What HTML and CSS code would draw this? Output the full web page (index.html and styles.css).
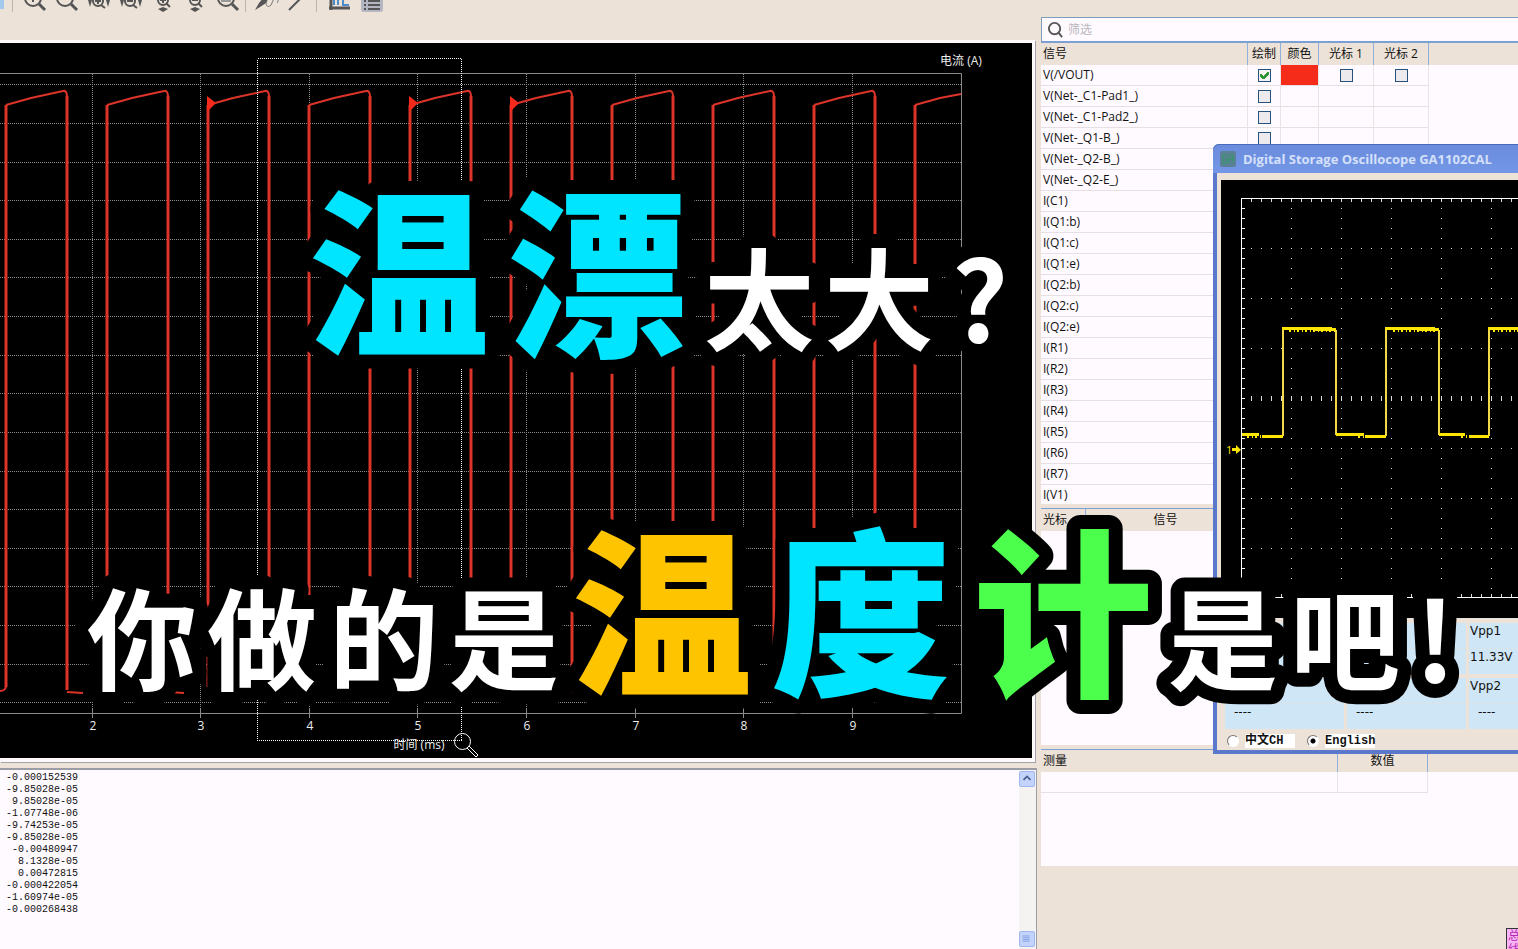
FILE: index.html
```html
<!DOCTYPE html>
<html lang="zh-CN">
<head>
    <meta charset="UTF-8">
    <meta name="viewport" content="width=device-width, initial-scale=1.0">
    <title>温漂太大?</title>
    <link rel="stylesheet" href="styles.css">
</head>
<body>
    <div class="simulator">
        <!-- Left side: toolbar, plot and log -->
        <main class="plot-side">
            <div class="toolbar">
                <span class="active-edge"></span>
                <span class="separator"></span>
                <button class="tool" aria-label="放大"><svg viewBox="0 0 32 24"><circle cx="14" cy="10" r="8"/><path d="M14 6v8M10 10h8"/><path class="thick" d="M20 16l6 6"/></svg></button>
                <button class="tool" aria-label="缩小"><svg viewBox="0 0 32 24"><circle cx="14" cy="10" r="8"/><path d="M10 10h8"/><path class="thick" d="M20 16l6 6"/></svg></button>
                <button class="tool" aria-label="水平放大"><svg viewBox="0 0 32 24"><circle cx="15" cy="13" r="5"/><path d="M15 10v6M12 13h6M18 17l4 3"/><path class="solid" d="M5 12h4l-2 7zM23 12h4l-2 7z"/></svg></button>
                <button class="tool" aria-label="水平缩小"><svg viewBox="0 0 32 24"><circle cx="15" cy="13" r="5"/><path d="M12 13h6M18 17l4 3"/><path class="solid" d="M5 12h4l-2 7zM23 12h4l-2 7z"/></svg></button>
                <button class="tool" aria-label="垂直放大"><svg viewBox="0 0 32 24"><circle cx="16" cy="12" r="5"/><path d="M16 9v6M13 12h6M19 15l4 4"/><path class="solid" d="M11 21l5-2 5 2-5 3z"/></svg></button>
                <button class="tool" aria-label="垂直缩小"><svg viewBox="0 0 32 24"><circle cx="16" cy="12" r="5"/><path d="M13 12h6M19 15l4 4"/><path class="solid" d="M11 21l5-2 5 2-5 3z"/></svg></button>
                <button class="tool" aria-label="适合窗口"><svg viewBox="0 0 32 24"><circle cx="15" cy="10" r="8"/><path class="grey" d="M10 6h10v8H10z"/><path class="thick" d="M21 16l6 6"/></svg></button>
                <span class="separator"></span>
                <button class="tool" aria-label="探针"><svg viewBox="0 0 32 24"><path class="solid" d="M5 22l4-7 5-6h5l-3 6-6 4z"/><path class="wire" d="M17 13c-3 5 2 7 4 4s1-5 4-6 4 2 2 4"/></svg></button>
                <button class="tool" aria-label="调整"><svg viewBox="0 0 32 24"><path d="M7 22L23 6"/></svg></button>
                <span class="separator"></span>
                <button class="tool" aria-label="波形"><svg viewBox="0 0 32 24"><path class="blue" d="M13 17V6M17 17V8h5v9h6"/><path class="thick" d="M10 4v18M8 20h21"/></svg></button>
                <button class="tool" aria-label="列表"><svg viewBox="0 0 32 24"><path class="pressed" d="M8 0h22v21q0 3-3 3H11q-3 0-3-3z"/><path d="M15 9h12M15 13h12M15 17h12M15 21h12M11 9h2M11 13h2M11 17h2M11 21h2"/></svg></button>
            </div>

            <div class="plot">
                <svg class="plot-canvas" viewBox="0 43 1032 715" preserveAspectRatio="xMinYMin slice">
                    <defs>
                        <!-- One period of the output voltage, 101 units wide -->
                        <g id="cycle">
                            <path class="edge" d="M0 687V105M61 96V690"/>
                            <path class="crest" d="M0 105L25 98L57 91Q61 90 61 97"/>
                            <path class="crest" d="M61 692l16 1"/>
                        </g>
                        <path id="spike" class="spike" d="M0 96v16l9-9z"/>
                    </defs>
                    <path class="grid" d="M92.5 74V713M200.5 74V713M309.5 74V713M417.5 74V713M526.5 74V713M635.5 74V713M743.5 74V713M852.5 74V713"/>
                    <path class="grid" d="M0 84.5H961M0 123.5H961M0 162.5H961M0 200.5H961M0 239.5H961M0 277.5H961M0 316.5H961M0 355.5H961M0 393.5H961M0 432.5H961M0 471.5H961M0 509.5H961M0 548.5H961M0 586.5H961M0 625.5H961M0 664.5H961M0 702.5H961"/>
                    <path class="frame" d="M0 73.5H961.5V713.5H0M92.5 709v9M200.5 709v9M309.5 709v9M417.5 709v9M526.5 709v9M635.5 709v9M743.5 709v9M852.5 709v9"/>
                    <path class="crest" d="M0 691q7 0 6-8"/>
                    <use href="#cycle" x="6"/>
                    <use href="#cycle" x="107"/>
                    <use href="#cycle" x="208"/>
                    <use href="#cycle" x="309"/>
                    <use href="#cycle" x="410"/>
                    <use href="#cycle" x="511"/>
                    <use href="#cycle" x="612"/>
                    <use href="#cycle" x="713"/>
                    <use href="#cycle" x="814"/>
                    <path class="edge" d="M915 690V105"/>
                    <path class="crest" d="M915 105L940 98L961 94"/>
                    <use href="#spike" x="207"/>
                    <use href="#spike" x="409"/>
                    <use href="#spike" x="510"/>
                    <path class="selection" d="M257.5 58.5H461.5V740.5H257.5z"/>
                    <g class="labels">
                        <text x="961" y="65">电流 (A)</text>
                        <text x="93" y="730">2</text>
                        <text x="201" y="730">3</text>
                        <text x="310" y="730">4</text>
                        <text x="418" y="730">5</text>
                        <text x="527" y="730">6</text>
                        <text x="636" y="730">7</text>
                        <text x="744" y="730">8</text>
                        <text x="853" y="730">9</text>
                        <text x="419" y="749">时间 (ms)</text>
                    </g>
                    <g class="pointer"><circle cx="462.5" cy="741.5" r="8"/><path d="M467 748l9 9 2-2-9-9"/></g>
                </svg>
            </div>

            <div class="log">
                <textarea class="log-text" aria-label="输出" readonly>-0.000152539
-9.85028e-05
 9.85028e-05
-1.07748e-06
-9.74253e-05
-9.85028e-05
 -0.00480947
  8.1328e-05
  0.00472815
-0.000422054
-1.60974e-05
-0.000268438</textarea>
                <div class="scrollbar">
                    <button class="scroll-btn" aria-label="向上滚动"><svg viewBox="0 0 16 16"><path d="M4 9l4-4 4 4" stroke-width="2"/></svg></button>
                    <button class="scroll-btn" aria-label="滚动条"><svg viewBox="0 0 16 16"><path d="M3 4.500h8M3 6.500h8M3 8.500h8M3 10.500h8" stroke="#7c9be0"/></svg></button>
                </div>
            </div>
        </main>

        <!-- Right side: signals, cursors and measurements -->
        <aside class="signal-side">
            <label class="filter">
                <svg viewBox="0 0 18 18"><circle cx="8" cy="8" r="6"/><path d="M12 12l4 5"/></svg>
                <input type="text" placeholder="筛选">
            </label>

            <div class="panel signals">
                <table>
                    <thead>
                        <tr><th class="name">信号</th><th class="draw">绘制</th><th class="color">颜色</th><th class="cursor">光标 1</th><th class="cursor">光标 2</th><th></th></tr>
                    </thead>
                    <tbody>
                        <tr><td>V(/VOUT)</td><td><input type="checkbox" aria-label="绘制 VOUT" checked></td><td class="red"></td><td><input type="checkbox" aria-label="光标 1"></td><td><input type="checkbox" aria-label="光标 2"></td><td></td></tr>
                        <tr><td>V(Net-_C1-Pad1_)</td><td><input type="checkbox" aria-label="绘制 C1-Pad1"></td><td></td><td></td><td></td><td></td></tr>
                        <tr><td>V(Net-_C1-Pad2_)</td><td><input type="checkbox" aria-label="绘制 C1-Pad2"></td><td></td><td></td><td></td><td></td></tr>
                        <tr><td>V(Net-_Q1-B_)</td><td><input type="checkbox" aria-label="绘制 Q1-B"></td><td></td><td></td><td></td><td></td></tr>
                        <tr><td>V(Net-_Q2-B_)</td><td></td><td></td><td></td><td></td><td></td></tr>
                        <tr><td>V(Net-_Q2-E_)</td><td></td><td></td><td></td><td></td><td></td></tr>
                        <tr><td>I(C1)</td><td></td><td></td><td></td><td></td><td></td></tr>
                        <tr><td>I(Q1:b)</td><td></td><td></td><td></td><td></td><td></td></tr>
                        <tr><td>I(Q1:c)</td><td></td><td></td><td></td><td></td><td></td></tr>
                        <tr><td>I(Q1:e)</td><td></td><td></td><td></td><td></td><td></td></tr>
                        <tr><td>I(Q2:b)</td><td></td><td></td><td></td><td></td><td></td></tr>
                        <tr><td>I(Q2:c)</td><td></td><td></td><td></td><td></td><td></td></tr>
                        <tr><td>I(Q2:e)</td><td></td><td></td><td></td><td></td><td></td></tr>
                        <tr><td>I(R1)</td><td></td><td></td><td></td><td></td><td></td></tr>
                        <tr><td>I(R2)</td><td></td><td></td><td></td><td></td><td></td></tr>
                        <tr><td>I(R3)</td><td></td><td></td><td></td><td></td><td></td></tr>
                        <tr><td>I(R4)</td><td></td><td></td><td></td><td></td><td></td></tr>
                        <tr><td>I(R5)</td><td></td><td></td><td></td><td></td><td></td></tr>
                        <tr><td>I(R6)</td><td></td><td></td><td></td><td></td><td></td></tr>
                        <tr><td>I(R7)</td><td></td><td></td><td></td><td></td><td></td></tr>
                        <tr><td>I(V1)</td><td></td><td></td><td></td><td></td><td></td></tr>
                    </tbody>
                </table>
            </div>

            <div class="panel cursors">
                <table>
                    <thead><tr><th class="which">光标</th><th class="source">信号</th><th></th></tr></thead>
                </table>
            </div>

            <div class="panel measures">
                <table>
                    <thead><tr><th class="measure">测量</th><th class="value">数值</th><th></th></tr></thead>
                    <tbody><tr><td></td><td></td><td></td></tr></tbody>
                </table>
            </div>
        </aside>
    </div>

    <!-- Oscilloscope window -->
    <section class="scope">
        <header class="scope-title">
            <svg viewBox="0 0 16 16"><rect width="16" height="16" rx="2" fill="#5b7f94"/><path d="M7 4H3v8h4V8H5M9 12V4h4v8M9 8h4" fill="none" stroke="#2f9a62"/></svg>
            <h1>Digital Storage Oscillocope GA1102CAL</h1>
        </header>
        <div class="scope-body">
            <svg class="scope-screen" viewBox="0 0 480 438">
                <defs>
                    <pattern id="columnDots" x="20" y="18" width="50" height="10" patternUnits="userSpaceOnUse"><rect width="1" height="1" fill="#ddd"/></pattern>
                    <pattern id="rowDots" x="20" y="18" width="10" height="50" patternUnits="userSpaceOnUse"><rect width="1" height="1" fill="#ddd"/></pattern>
                    <pattern id="ticks" x="20" y="0" width="10" height="438" patternUnits="userSpaceOnUse"><path d="M.5 18v4M.5 216v5M.5 414v4" stroke="#ddd"/></pattern>
                    <pattern id="sideTicks" x="0" y="18" width="480" height="10" patternUnits="userSpaceOnUse"><path d="M20 .5h4" stroke="#fff"/></pattern>
                </defs>
                <rect x="20" y="18" width="460" height="400" fill="url(#columnDots)"/>
                <rect x="20" y="18" width="460" height="400" fill="url(#rowDots)"/>
                <rect x="20" y="18" width="460" height="400" fill="url(#ticks)"/>
                <rect x="20" y="18" width="8" height="400" fill="url(#sideTicks)"/>
                <path d="M480 18.5H20.5V417.5H480" fill="none" stroke="#fff"/>
                <path class="trace-edge" d="M62 256V148M115 150V255M165 256V148M218 150V255M268 256V148"/>
                <path class="trace" d="M21 254.500h17M41 256.500h21M61 148.500h50M92 149.500h23M115 254.500h28M144 256.500h21M164 148.500h50M196 149.500h22M218 254.500h26M248 256.500h20M267 148.500h50"/>
                <path class="noise" d="M68 150.500h46M172 150.500h45M272 150.500h40M26 256.500h14M137 256.500h8M240 256.500h8"/>
                <text x="5" y="274" class="channel">1</text>
                <path d="M11 268h4v-3l5 5-5 4v-3h-4z" fill="#ffe600"/>
            </svg>
            <div class="readings">
                <div class="reading"><span></span><span></span></div>
                <div class="reading"><span></span><span></span></div>
                <div class="reading"><span>Vpp1</span><span>11.33V</span></div>
                <div class="reading"></div>
                <div class="reading"><span></span><span>----</span></div>
                <div class="reading"><span></span><span>----</span></div>
                <div class="reading"><span>Vpp2</span><span>----</span></div>
                <div class="reading"></div>
            </div>
            <div class="languages">
                <label><input type="radio" name="lang"><span>中文CH</span></label>
                <label><input type="radio" name="lang" checked><span>English</span></label>
            </div>
        </div>
    </section>

    <!-- Floating input method badge -->
    <div class="badge">总线</div>

    <!-- Video captions -->
    <svg class="captions" viewBox="0 0 1518 949" preserveAspectRatio="xMinYMin slice">
        <text y="342">
            <tspan class="big cyan" x="399">温</tspan><tspan class="big cyan" x="598">漂</tspan><tspan x="759">太</tspan><tspan x="879">大</tspan><tspan x="980">?</tspan>
        </text>
        <text y="682">
            <tspan x="142">你</tspan><tspan x="262">做</tspan><tspan x="384">的</tspan><tspan x="504">是</tspan><tspan class="big amber" x="662">温</tspan><tspan class="big cyan" x="861">度</tspan><tspan class="big green" x="1063">计</tspan><tspan x="1223">是</tspan><tspan x="1345">吧</tspan><tspan x="1435">!</tspan>
        </text>
    </svg>
</body>
</html>
```
FILE: styles.css
```css
/* General Reset */
* {
    margin: 0;
    padding: 0;
    box-sizing: border-box;
}

html {
    overflow: hidden;
}

body {
    height: 100vh;
    position: relative;
    overflow: hidden;
    background: #ece2d8;
    color: #111;
    font-family: 'Open Sans', 'Noto Sans CJK SC', sans-serif;
    font-size: 12px;
}

.simulator {
    display: grid;
    grid-template-columns: minmax(0, 1fr) 477px;
    column-gap: 4px;
    height: 100%;
}

/* Left side */
.plot-side {
    display: flex;
    flex-direction: column;
    min-width: 0;
    height: 100%;
}

.toolbar {
    display: flex;
    align-items: flex-end;
    height: 40px;
    padding-bottom: 28px;
    flex: none;
    overflow: hidden;
}

.active-edge {
    width: 4px;
    height: 9px;
    margin-bottom: 3px;
    background: #a3c8ec;
}

.separator {
    width: 1px;
    height: 14px;
    margin: 0 4px 0 2px;
    background: #bdb6ae;
}

.active-edge + .separator {
    margin: 0 6px 0 8px;
}

.tool {
    width: 32px;
    height: 24px;
    flex: none;
    border: 0;
    background: none;
}

.tool svg {
    display: block;
    width: 32px;
    height: 24px;
    fill: none;
    stroke: #555;
    stroke-width: 2;
}

.tool .thick {
    stroke-width: 3;
}

.tool .wire {
    stroke: #777;
    stroke-width: 1;
}

.tool .solid {
    fill: #555;
    stroke: none;
}

.tool .grey {
    fill: #999;
    stroke: none;
}

.tool .blue {
    stroke: #4b8dc8;
}

.tool .pressed {
    fill: #b4b6c2;
    stroke: none;
}

/* Plot */
.plot {
    flex: none;
    height: 722px;
    margin-right: 2px;
    border: 3px solid #fdf9fb;
    border-left: 0;
    border-bottom-width: 4px;
    box-shadow: 1px 1px #a2a4ad;
    background: #000;
}

.plot-canvas {
    display: block;
    width: 100%;
    height: 100%;
    fill: none;
}

.grid {
    stroke: #8a8a8a;
    stroke-dasharray: 1 1;
    shape-rendering: crispEdges;
}

.frame {
    stroke: #8a8a8a;
}

.edge {
    stroke: #dc3428;
    stroke-width: 3;
}

.crest {
    stroke: #dc3428;
    stroke-width: 2;
}

.spike {
    fill: #f32a1c;
}

.selection {
    stroke: #fff;
    stroke-dasharray: 1 1;
    shape-rendering: crispEdges;
}

.labels {
    fill: #eee;
    font-size: 12px;
    text-anchor: middle;
}

.pointer {
    stroke: #fff;
}

/* Log */
.log {
    display: flex;
    flex: 1;
    min-height: 0;
    margin-top: 6px;
    border-top: 2px solid #9a9ca6;
    border-right: 1px solid #9a9ca6;
    background: #fefaff;
}

.log-text {
    flex: 1;
    padding: 2px 6px;
    border: 0;
    outline: 0;
    resize: none;
    overflow: hidden;
    background: transparent;
    color: #111;
    font-family: 'Liberation Mono', monospace;
    font-size: 10px;
    line-height: 12px;
}

.scrollbar {
    display: flex;
    flex-direction: column;
    justify-content: space-between;
    width: 17px;
    padding: 1px 1px 2px 0;
    background: #f5f2f2;
}

.scroll-btn {
    width: 16px;
    height: 16px;
    border: 1px solid #9fb7ee;
    border-radius: 2px;
    background: #c3d3fb;
}

.scroll-btn svg {
    display: block;
    width: 14px;
    height: 14px;
    fill: none;
    stroke: #4a5f8c;
}

/* Right side */
.signal-side {
    display: flex;
    flex-direction: column;
    gap: 4px;
    padding-top: 17px;
}

.filter {
    display: flex;
    align-items: center;
    gap: 4px;
    height: 26px;
    margin-bottom: -4px;
    padding-left: 5px;
    border: 1px solid #7f9db9;
    border-bottom: 2px solid #7c9fd6;
    border-right: 0;
    background: #fefaff;
}

.filter svg {
    width: 17px;
    height: 17px;
    fill: none;
    stroke: #555;
    stroke-width: 2;
}

.filter input {
    flex: 1;
    border: 0;
    outline: 0;
    background: none;
    font: inherit;
}

.filter input::placeholder {
    color: #b9b7bd;
}

.panel {
    overflow: hidden;
    background: #fefaff;
}

.panel table {
    width: 100%;
    table-layout: fixed;
    border-collapse: separate;
    border-spacing: 0;
}

.panel th {
    height: 22px;
    border-right: 1px solid #8fb0dc;
    background: #ece2d8;
    font-weight: normal;
    line-height: 20px;
}

.panel th:first-child {
    padding-left: 2px;
    text-align: left;
}

.panel th:last-child,
.panel td:last-child {
    border: 0;
}

.panel td {
    height: 21px;
    border-right: 1px solid #ebe4e4;
    border-bottom: 1px solid #e6e0e2;
    line-height: 18px;
    text-align: center;
}

.panel td:first-child {
    padding-left: 2px;
    text-align: left;
}

.signals {
    height: 461px;
}

.signals .name {
    width: 207px;
}

.signals .draw {
    width: 33px;
}

.signals .color {
    width: 38px;
}

.signals .cursor {
    width: 55px;
}

.signals .red {
    background: #f52c19;
}

.signals input {
    appearance: none;
    display: block;
    width: 13px;
    height: 13px;
    margin: 0 auto;
    border: 1px solid #28527e;
    background: #eceaec;
}

.signals input:checked {
    background: linear-gradient(-45deg, transparent 38%, #2c9433 38% 62%, transparent 62%) 4px 2px / 6px 7px no-repeat,
        linear-gradient(45deg, transparent 32%, #2c9433 32% 68%, transparent 68%) 1px 4px / 4px 5px no-repeat,
        #f2f2f2;
}

.cursors,
.measures {
    border-top: 1px solid #7c9fd6;
}

.cursors {
    height: 237px;
}

.cursors .which {
    width: 45px;
}

.cursors .source {
    width: 160px;
}

.measures {
    height: 117px;
}

.measures .measure {
    width: 297px;
}

.measures .value {
    width: 90px;
}

/* Oscilloscope window, partly outside the screen */
.scope {
    position: absolute;
    top: 144px;
    right: -195px;
    width: 500px;
    border: 4px solid #5b78cc;
    border-top: 0;
    border-radius: 6px 6px 0 0;
    background: #ece2d8;
}

.scope-title {
    display: flex;
    align-items: center;
    gap: 7px;
    height: 29px;
    margin: 0 -4px;
    padding-left: 7px;
    border-radius: 6px 6px 0 0;
    border-top: 1px solid #4a69bd;
    background: linear-gradient(#6b8bdc, #7397e6);
}

.scope-title svg {
    width: 16px;
    height: 16px;
}

.scope-title h1 {
    color: #d5e0fa;
    font-family: 'Open Sans', sans-serif;
    font-size: 13px;
    font-weight: bold;
}

.scope-body {
    padding: 7px 4px 0;
}

.scope-screen {
    display: block;
    width: 480px;
    height: 438px;
    background: #000;
}

.trace {
    fill: none;
    stroke: #ffe600;
    stroke-width: 3;
}

.trace-edge {
    fill: none;
    stroke: #f3d94a;
    stroke-width: 2;
}

.noise {
    fill: none;
    stroke: #ffe600;
    stroke-width: 3;
    stroke-dasharray: 2 3 1 2;
}

.channel {
    fill: #ffe600;
    font-size: 11px;
}

.readings {
    display: grid;
    grid-template-columns: repeat(4, 119px);
    gap: 4px 3px;
    padding: 5px 4px 3px;
    font-family: 'DejaVu Sans', sans-serif;
}

.reading {
    display: grid;
    grid-template-rows: 25px 26px;
    height: 51px;
    overflow: hidden;
    background: #cfe6f6;
    line-height: 16px;
}

.reading span {
    padding-left: 1px;
}

.reading span + span {
    padding-left: 9px;
    border-top: 1px solid #d9e3ea;
}

.reading:nth-child(3) span + span {
    padding-left: 1px;
}

.languages {
    display: flex;
    gap: 12px;
    padding: 0 6px;
    font-family: 'Liberation Mono', 'Noto Sans CJK SC', monospace;
    font-weight: bold;
}

.languages label {
    display: flex;
    align-items: center;
    gap: 6px;
    height: 18px;
}

.languages input {
    appearance: none;
    width: 12px;
    height: 12px;
    border: 1px solid #fff;
    border-top-color: #777;
    border-left-color: #777;
    border-radius: 50%;
    background: #fff;
}

.languages input:checked {
    background: radial-gradient(circle, #000 2px, #fff 3px);
}

.languages span {
    width: 50px;
    background: #fff;
    line-height: 14px;
}

/* Badge in the bottom corner */
.badge {
    position: absolute;
    top: 928px;
    right: -8px;
    width: 20px;
    padding-left: 1px;
    border: 1px solid #333;
    background: #fcb4f8;
    color: #b02bb0;
    line-height: 14px;
}

/* Captions */
.captions {
    position: absolute;
    top: 0;
    left: 0;
    width: 100%;
    height: 100%;
    pointer-events: none;
    fill: #fff;
    stroke: #000;
    stroke-width: 28px;
    stroke-linejoin: round;
    paint-order: stroke fill;
    font-family: 'Noto Sans CJK SC', sans-serif;
    font-size: 110px;
    font-weight: 700;
    text-anchor: middle;
}

.captions .big {
    font-size: 180px;
    font-weight: 900;
}

.captions .cyan {
    fill: #00e5ff;
}

.captions .amber {
    fill: #ffc400;
}

.captions .green {
    fill: #4cff4c;
}
```
